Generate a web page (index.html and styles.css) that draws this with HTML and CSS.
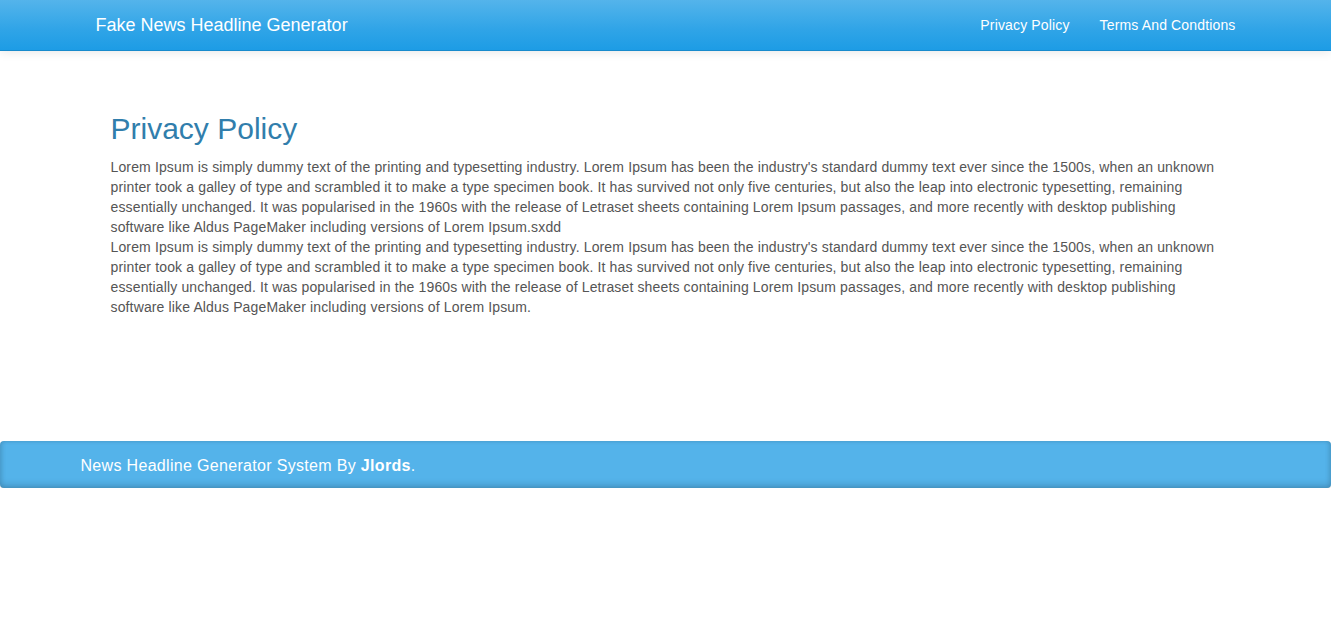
FILE: index.html
```html
<!DOCTYPE html>
<html>
<head>
<meta charset="utf-8">
<title>Privacy Policy</title>
<link rel="stylesheet" href="styles.css">
</head>
<body>
<nav class="navbar">
  <div class="container nav-inner">
    <a class="brand" href="#">Fake News Headline Generator</a>
    <ul class="nav-links">
      <li><a href="#">Privacy Policy</a></li>
      <li><a href="#">Terms And Condtions</a></li>
    </ul>
  </div>
</nav>
<main class="container main">
  <div class="content">
    <h2 class="title">Privacy Policy</h2>
    <p class="text">Lorem Ipsum is simply dummy text of the printing and typesetting industry. Lorem Ipsum has been the industry's standard dummy text ever since the 1500s, when an unknown printer took a galley of type and scrambled it to make a type specimen book. It has survived not only five centuries, but also the leap into electronic typesetting, remaining essentially unchanged. It was popularised in the 1960s with the release of Letraset sheets containing Lorem Ipsum passages, and more recently with desktop publishing software like Aldus PageMaker including versions of Lorem Ipsum.sxdd<br>Lorem Ipsum is simply dummy text of the printing and typesetting industry. Lorem Ipsum has been the industry's standard dummy text ever since the 1500s, when an unknown printer took a galley of type and scrambled it to make a type specimen book. It has survived not only five centuries, but also the leap into electronic typesetting, remaining essentially unchanged. It was popularised in the 1960s with the release of Letraset sheets containing Lorem Ipsum passages, and more recently with desktop publishing software like Aldus PageMaker including versions of Lorem Ipsum.</p>
  </div>
</main>
<footer class="footer">
  <div class="footer-inner">News Headline Generator System By <strong>Jlords</strong>.</div>
</footer>
</body>
</html>
```
FILE: styles.css
```css
* { box-sizing: border-box; }
html, body {
  margin: 0;
  padding: 0;
}
body {
  font-family: "Liberation Sans", Arial, sans-serif;
  font-size: 14px;
  line-height: 20px;
  color: #555555;
  background: #ffffff;
}
.container {
  width: 1170px;
  margin: 0 auto;
  padding: 0 15px;
}
.navbar {
  height: 51px;
  background-image: linear-gradient(#54b4eb, #2fa4e7 60%, #1d9ce5);
  border-bottom: 1px solid #178acc;
  box-shadow: 0 1px 10px rgba(0, 0, 0, 0.1);
}
.nav-inner {
  display: flex;
  justify-content: space-between;
  align-items: center;
  height: 50px;
}
.brand {
  color: #ffffff;
  text-decoration: none;
  font-size: 18px;
  line-height: 20px;
  padding: 15px 0;
}
.nav-links {
  list-style: none;
  margin: 0 -15px 0 0;
  padding: 0;
  display: flex;
}
.nav-links a {
  display: block;
  color: #ffffff;
  text-decoration: none;
  font-size: 14px;
  line-height: 20px;
  letter-spacing: 0.15px;
  padding: 15px 15px;
}
.main {
  padding-top: 43px;
  min-height: 390px;
}
.content {
  padding: 0 15px;
}
.title {
  margin: 18px 0 12px;
  font-size: 30px;
  line-height: 33px;
  font-weight: 500;
  color: #317eac;
}
.text {
  margin: 0;
  letter-spacing: 0.14px;
}
.footer {
  height: 47px;
  background: #54b3ea;
  border-radius: 4px;
  box-shadow: inset 0 -4px 6px rgba(0, 0, 0, 0.12), inset 2px 0 4px rgba(0, 0, 0, 0.08), inset -2px 0 4px rgba(0, 0, 0, 0.08), 0 1px 1px rgba(0, 0, 0, 0.1);
  color: #ffffff;
}
.footer-inner {
  width: 1170px;
  margin: 0 auto;
  padding-top: 15px;
  font-size: 16px;
  line-height: 20px;
  letter-spacing: 0.32px;
}
.footer-inner strong {
  font-weight: 700;
}
```
